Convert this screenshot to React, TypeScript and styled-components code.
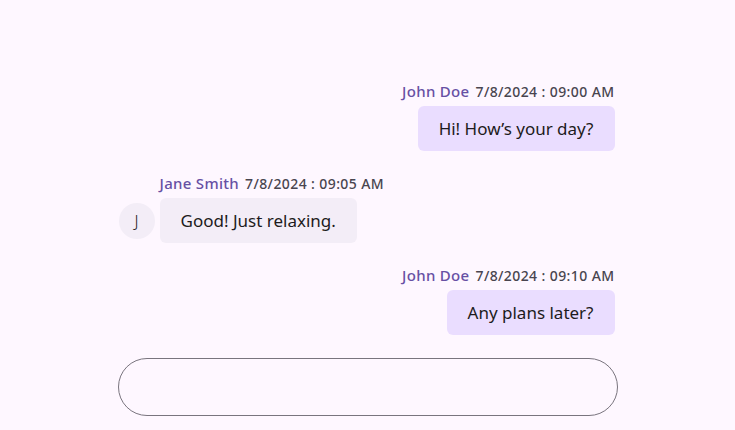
import React from "react";
import styled, { createGlobalStyle } from "styled-components";

const Global = createGlobalStyle`
  html, body { margin: 0; padding: 0; background: #fef7ff; }
  body { font-family: "Noto Sans", "Open Sans", sans-serif; color: #1d1b20; }
  * { box-sizing: border-box; }
`;

const Page = styled.div`
  height: 430px;
  display: flex;
  justify-content: center;
`;

const Chat = styled.div`
  width: 500px;
  display: flex;
  flex-direction: column;
  justify-content: flex-end;
  padding-bottom: 14px;
`;

const List = styled.div`
  display: flex;
  flex-direction: column;
  gap: 22px;
  padding-right: 3px;
`;

const Message = styled.div<{ $self: boolean }>`
  display: flex;
  flex-direction: column;
  align-items: ${(p) => (p.$self ? "flex-end" : "flex-start")};
  gap: 4px;
`;

const Header = styled.div<{ $self: boolean }>`
  display: flex;
  align-items: baseline;
  gap: 6px;
  line-height: 20px;
  padding-left: ${(p) => (p.$self ? "0" : "42px")};
`;

const Name = styled.span`
  color: #6750a4;
  font-size: 15px;
  font-weight: 500;
  letter-spacing: 0.3px;
`;

const Time = styled.span`
  color: #49454f;
  font-size: 14px;
  font-weight: 500;
  letter-spacing: 0.4px;
`;

const Row = styled.div`
  display: flex;
  align-items: center;
  gap: 5px;
`;

const Avatar = styled.div`
  width: 36px;
  height: 36px;
  margin-left: 1px;
  border-radius: 50%;
  background: #f3edf7;
  display: flex;
  align-items: center;
  justify-content: center;
  font-size: 16px;
  font-weight: 300;
  color: #1d1b20;
`;

const Bubble = styled.div<{ $self: boolean }>`
  background: ${(p) => (p.$self ? "#eaddff" : "#f3edf7")};
  border-radius: 6px;
  padding: 0 21px;
  height: 45px;
  display: flex;
  align-items: center;
  font-size: 17px;
  font-weight: 400;
`;

const Input = styled.div`
  margin-top: 23px;
  height: 58px;
  border: 1px solid #79747e;
  border-radius: 29px;
`;

type Msg = { self: boolean; name: string; time: string; text: string; initial?: string };

const messages: Msg[] = [
  { self: true, name: "John Doe", time: "7/8/2024 : 09:00 AM", text: "Hi! How’s your day?" },
  { self: false, name: "Jane Smith", time: "7/8/2024 : 09:05 AM", text: "Good! Just relaxing.", initial: "J" },
  { self: true, name: "John Doe", time: "7/8/2024 : 09:10 AM", text: "Any plans later?" },
];

export default function App() {
  return (
    <>
      <Global />
      <Page>
        <Chat>
          <List>
            {messages.map((m, i) => (
              <Message key={i} $self={m.self}>
                <Header $self={m.self}>
                  <Name>{m.name}</Name>
                  <Time>{m.time}</Time>
                </Header>
                {m.self ? (
                  <Bubble $self>{m.text}</Bubble>
                ) : (
                  <Row>
                    <Avatar>{m.initial}</Avatar>
                    <Bubble $self={false}>{m.text}</Bubble>
                  </Row>
                )}
              </Message>
            ))}
          </List>
          <Input />
        </Chat>
      </Page>
    </>
  );
}
